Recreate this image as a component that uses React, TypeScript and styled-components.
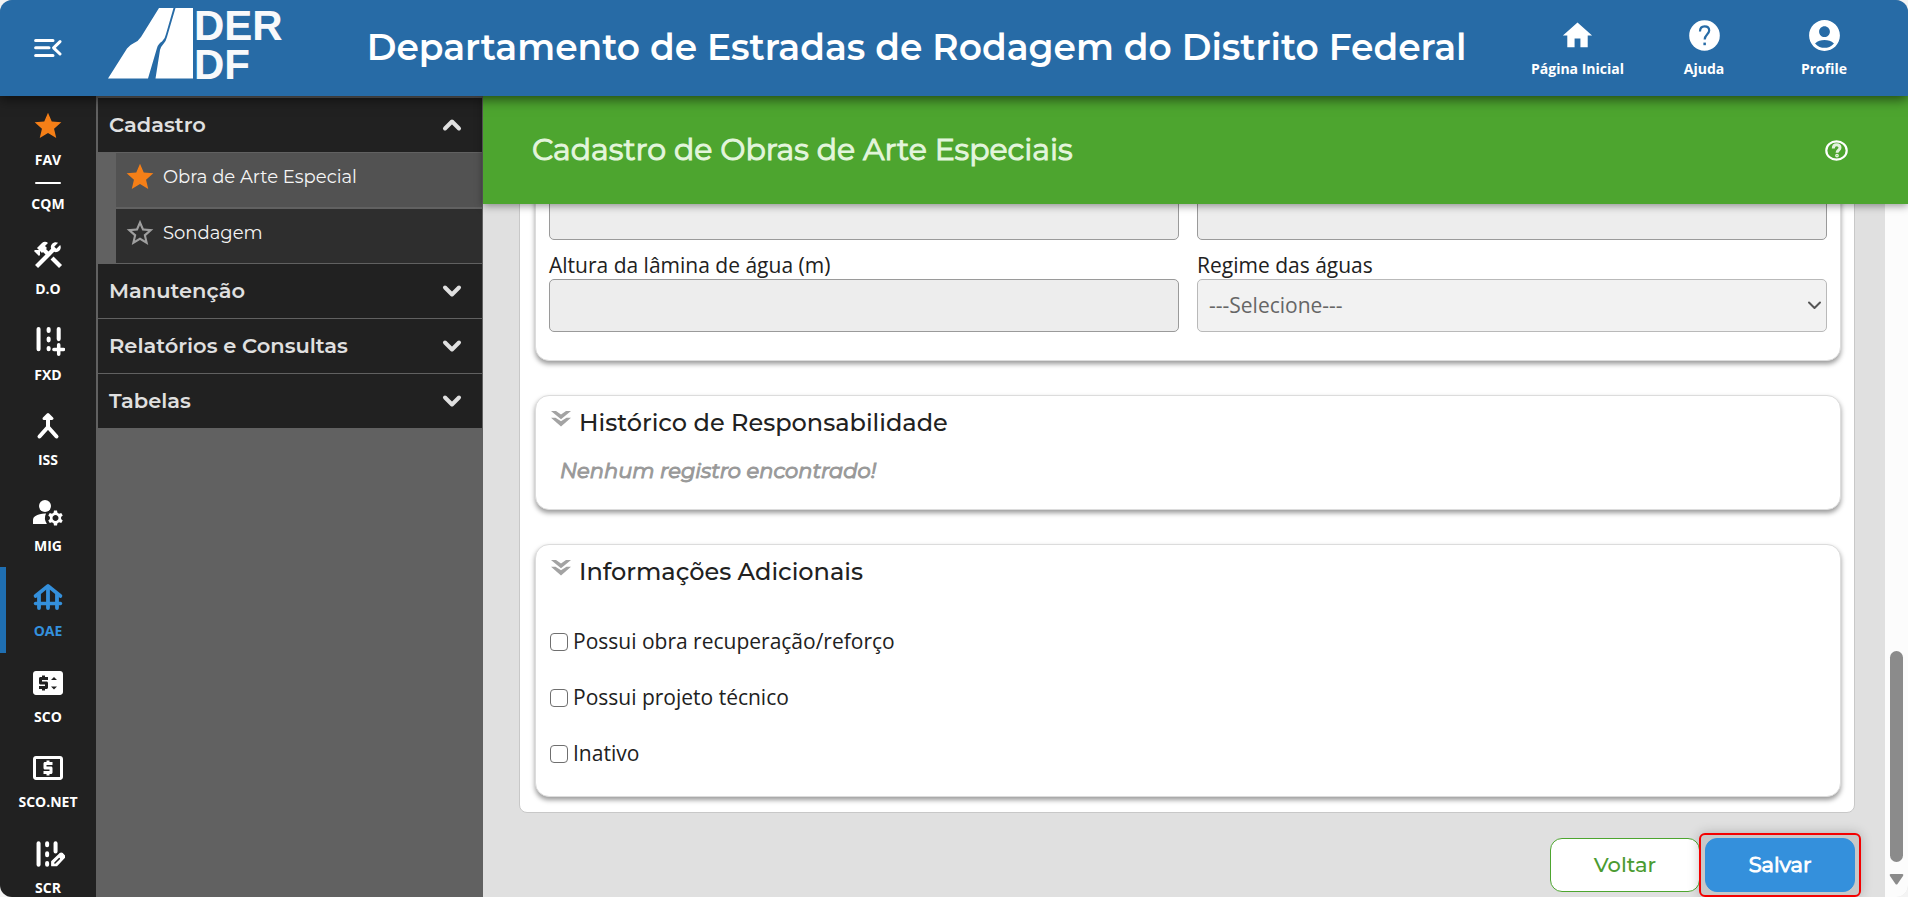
import React from 'react';
import styled, { createGlobalStyle } from 'styled-components';
import {
  MdAccountCircle,
  MdConstruction,
  MdHome,
  MdLocalAtm,
  MdManageAccounts,
  MdPriceChange,
  MdStar,
  MdStarBorder,
} from 'react-icons/md';

const HEADING_FONT = "Montserrat, Inter, 'Open Sans', sans-serif";
const BODY_FONT = "'Open Sans', 'Noto Sans', sans-serif";

const GlobalStyle = createGlobalStyle`
  *, *::before, *::after { box-sizing: border-box; }
  body { margin: 0; background: #f4f4f4; font-family: ${BODY_FONT}; color: #212121; }
  h1, h2, h3, p, ul { margin: 0; padding: 0; }
  ul { list-style: none; }
  a { color: inherit; text-decoration: none; }
  button, input, select { font: inherit; }
  svg { display: block; flex: none; }
`;

/* ---------- shell ---------- */

const Shell = styled.div`
  display: flex;
  flex-direction: column;
  height: 100vh;
  overflow: hidden;
  border-radius: 12px;
  background: #e0e0e0;
`;

const TopBar = styled.header`
  display: flex;
  align-items: center;
  flex: none;
  height: 96px;
  padding-right: 44px;
  background: #276ba6;
  color: #fff;
  box-shadow: 0 3px 12px rgba(0, 0, 0, 0.6);
  z-index: 2;
`;

const MenuButton = styled.button`
  display: grid;
  place-items: center;
  width: 96px;
  height: 96px;
  padding: 0;
  border: 0;
  background: none;
  color: inherit;
  cursor: pointer;
`;

const LogoLink = styled.a`
  display: flex;
  align-self: flex-start;
  gap: 1px;
  margin: 0 84px 0 12px;
  padding-top: 6px;
  svg { margin-top: 2px; }
`;

const LogoText = styled.span`
  font: 700 42px/39px 'Liberation Sans', Arial, sans-serif;
  color: #f8f9fb;
  span { display: block; }
`;

const SiteTitle = styled.h1`
  flex: 1;
  padding-bottom: 2px;
  font: 600 36px/48px ${HEADING_FONT};
  white-space: nowrap;
`;

const TopActions = styled.nav`
  display: flex;
  gap: 40px;
`;

const TopAction = styled.a`
  display: flex;
  flex-direction: column;
  align-items: center;
  gap: 8px;
  min-width: 80px;
  padding-top: 2px;
  font-size: 14px;
  line-height: 20px;
  font-weight: 700;
`;

const Body = styled.div`
  display: flex;
  flex: 1;
  min-height: 0;
`;

/* ---------- module rail ---------- */

const Rail = styled.nav`
  flex: none;
  width: 96px;
  overflow: hidden;
  background: #212121;
  color: #fff;
`;

const RailItem = styled.a<{ $active?: boolean }>`
  display: flex;
  flex-direction: column;
  align-items: center;
  gap: 6px;
  height: 85px;
  padding-top: 14px;
  font-size: 14px;
  line-height: 24px;
  font-weight: 700;
  color: ${(p) => (p.$active ? '#3490dc' : '#fff')};
  box-shadow: ${(p) => (p.$active ? 'inset 6px 0 #1f6fb2' : 'none')};
  &:nth-child(odd) { height: 86px; }
`;

const RailText = styled.a`
  display: flex;
  flex-direction: column;
  align-items: center;
  height: 43px;
  font-size: 14px;
  line-height: 20px;
  font-weight: 700;
  &::before {
    content: '';
    width: 26px;
    height: 2px;
    margin-bottom: 10px;
    border-radius: 1px;
    background: currentColor;
  }
`;

/* ---------- section menu ---------- */

const SideMenu = styled.nav`
  display: flex;
  flex-direction: column;
  gap: 1px;
  flex: none;
  width: 387px;
  padding: 2px 1px 0 2px;
  background: #616161;
  color: #e0e0e0;
`;

const GroupButton = styled.button`
  display: flex;
  align-items: center;
  justify-content: space-between;
  width: 100%;
  height: 54px;
  padding: 0 20px 0 11px;
  border: 0;
  background: #212121;
  color: inherit;
  font: 600 21px/28px ${HEADING_FONT};
  text-align: left;
  cursor: pointer;
`;

const SubMenu = styled.ul`
  display: flex;
  flex-direction: column;
  gap: 2px;
  padding-left: 18px;
`;

const SubLink = styled.a<{ $active?: boolean }>`
  display: flex;
  align-items: center;
  gap: 7px;
  height: 54px;
  padding: 0 8px 6px;
  background: ${(p) => (p.$active ? '#525252' : '#2e2e2e')};
  font: 400 18px/28px ${HEADING_FONT};
  color: #f5f5f5;
`;

const IconTint = styled.span<{ $tint: string }>`
  display: inline-flex;
  color: ${(p) => p.$tint};
`;

/* ---------- main ---------- */

const Main = styled.main`
  display: flex;
  flex-direction: column;
  flex: 1;
  min-width: 0;
`;

const PageBar = styled.div`
  display: flex;
  align-items: center;
  justify-content: space-between;
  flex: none;
  height: 108px;
  padding: 0 60px 0 49px;
  background: #4da52f;
  box-shadow: 0 2px 8px rgba(0, 0, 0, 0.4);
  z-index: 1;
`;

const PageTitle = styled.h2`
  font: 400 30px/40px ${HEADING_FONT};
  -webkit-text-stroke: 1px currentColor;
  color: #e3f5dc;
`;

const HelpButton = styled.button`
  display: grid;
  padding: 0;
  border: 0;
  background: none;
  color: #fff;
  cursor: pointer;
`;

const Viewport = styled.div`
  display: flex;
  flex: 1;
  min-height: 0;
`;

const Scroller = styled.form`
  display: flex;
  flex-direction: column;
  justify-content: flex-end;
  flex: 1;
  min-width: 0;
  overflow: hidden;
  padding: 0 30px 0 36px;
`;

const Sheet = styled.div`
  display: flex;
  flex-direction: column;
  gap: 34px;
  flex: none;
  padding: 16px 13px 15px 15px;
  border: 1px solid #c8c8c8;
  border-radius: 8px;
  background: #fff;
`;

const Card = styled.section`
  padding: 9px 13px 24px;
  border: 1px solid #dcdcdc;
  border-radius: 14px;
  background: #fff;
  box-shadow: 0 3px 5px rgba(0, 0, 0, 0.4);
`;

const CardTitle = styled.h3`
  display: flex;
  align-items: flex-start;
  gap: 8px;
  font: 500 24px/36px ${HEADING_FONT};
  color: #212121;
  svg { margin: 6px 0 0 2px; }
`;

const EmptyNote = styled.p`
  padding: 16px 11px 0;
  font: italic 400 21px/28px ${HEADING_FONT};
  -webkit-text-stroke: 1px currentColor;
  color: #999;
`;

const Fields = styled.div`
  display: grid;
  grid-template-columns: 1fr 1fr;
  gap: 12px 18px;
  padding-bottom: 4px;
`;

const Field = styled.label`
  display: flex;
  flex-direction: column;
  font-size: 21px;
  line-height: 27px;
  font-weight: 400;
`;

const TextInput = styled.input`
  height: 53px;
  padding: 0 12px;
  border: 1px solid #9a9a9a;
  border-radius: 5px;
  background: #ededed;
`;

const SelectWrap = styled.span`
  display: flex;
  position: relative;
  svg { position: absolute; right: 5px; top: 22px; pointer-events: none; }
`;

const Select = styled.select`
  flex: 1;
  height: 53px;
  padding: 0 11px;
  border: 1px solid #b9b9b9;
  border-radius: 5px;
  appearance: none;
  background: #f2f2f2;
  color: #666;
  opacity: 1;
`;

const Checks = styled.div`
  display: flex;
  flex-direction: column;
  gap: 28px;
  padding: 37px 0 5px;
`;

const Check = styled.label`
  display: flex;
  align-items: center;
  gap: 5px;
  font-size: 21px;
  line-height: 28px;
  input {
    appearance: none;
    width: 18px;
    height: 18px;
    margin: 2px 0 0 1px;
    border: 1px solid #6f6f6f;
    border-radius: 4px;
    background: #fff;
  }
  input:checked { background: #3490dc; }
`;

const Actions = styled.div`
  display: flex;
  justify-content: flex-end;
  align-items: center;
  flex: none;
  margin-right: -6px;
  padding-top: 20px;
`;

const Button = styled.button<{ $primary?: boolean }>`
  width: 150px;
  height: 54px;
  padding: 0 0 1px;
  border: 1px solid ${(p) => (p.$primary ? '#3490dc' : '#4da52f')};
  border-radius: 12px;
  background: ${(p) => (p.$primary ? '#3490dc' : '#fff')};
  color: ${(p) => (p.$primary ? '#fff' : '#4b9b31')};
  font: ${(p) => (p.$primary ? 400 : 500)} 21px/28px ${HEADING_FONT};
  -webkit-text-stroke: ${(p) => (p.$primary ? '1px currentColor' : '0')};
  cursor: pointer;
`;

const Highlight = styled.span`
  display: inline-flex;
  margin-left: -1px;
  padding: 3px 4px;
  border: 2px solid #f40000;
  border-radius: 6px;
  background: #c8c8c8;
  box-shadow: 0 0 12px rgba(0, 0, 0, 0.22);
`;

const ScrollTrack = styled.div`
  display: flex;
  flex-direction: column;
  justify-content: flex-end;
  align-items: center;
  gap: 12px;
  flex: none;
  width: 23px;
  padding-bottom: 12px;
  background: #fcfcfc;
`;

const ScrollThumb = styled.div`
  width: 13px;
  height: 31%;
  border-radius: 7px;
  background: #8b8b8b;
`;

/* ---------- drawings ---------- */

const stroke = {
  fill: 'none',
  stroke: 'currentColor',
  strokeWidth: 2,
  strokeLinecap: 'round' as const,
  strokeLinejoin: 'round' as const,
};

const MenuOpenIcon = () => (
  <svg width="28" height="20" viewBox="0 0 28 20" {...stroke} strokeWidth={3}>
    <path d="M1.600 2.400H19M1.600 9.800H15M1.600 17.400H19" />
    <path d="M26 3.600L19.600 9.800L26 16" />
  </svg>
);

const LogoRoad = () => (
  <svg width="85" height="71" viewBox="0 0 85 71" fill="#fff">
    <path d="M51 0H65.500L58 26Q57 31 54 33.500Q50 36 49 40L40 70.500H0L19 40.500Q21.500 37 26 35Q30 33.500 33 29Z" />
    <path d="M67.500 0H85V70.500H47.500L52 42Q52.500 39 55 36.500Q58 33.500 59 29Z" />
  </svg>
);

const HelpIcon = () => (
  <svg width="31" height="31" viewBox="0 0 31 31">
    <circle cx="15.500" cy="15.500" r="15.300" fill="#fff" />
    <path
      d="M11 11.500C11 8.200 13 6.300 15.600 6.300C18.300 6.300 20.200 8 20.200 10.600C20.200 14 15.700 14.800 15.700 19.600"
      fill="none"
      stroke="#276ba6"
      strokeWidth="2.200"
    />
    <rect x="14.400" y="22.600" width="2.500" height="2.600" fill="#276ba6" />
  </svg>
);

const HelpOutlineIcon = () => (
  <svg width="23" height="21" viewBox="0 0 23 21" fill="none" stroke="currentColor">
    <ellipse cx="11.500" cy="10.500" rx="10.200" ry="9.200" strokeWidth="2.200" />
    <path d="M8.300 8.400C8.300 6.100 9.700 4.700 11.700 4.700C13.700 4.700 15 6 15 7.800C15 10 12.100 10.400 12.100 12.800" strokeWidth="3" opacity=".85" />
    <circle cx="12" cy="15.600" r="1.200" strokeWidth="1.400" opacity=".85" />
  </svg>
);

const Chevron = ({ up }: { up?: boolean }) => (
  <svg width="20" height="14" viewBox="0 0 20 14" {...stroke} strokeWidth={4}>
    <path d={up ? 'M3 10.500L10 3.500L17 10.500' : 'M3 3.500L10 10.500L17 3.500'} />
  </svg>
);

const SelectArrow = () => (
  <svg width="15" height="9" viewBox="0 0 15 9" {...stroke} stroke="#555">
    <path d="M2 1.500L7.500 7L13 1.500" />
  </svg>
);

const DoubleChevron = () => (
  <svg width="20" height="16" viewBox="0 0 20 16" fill="#a3a3a3">
    <path d="M0 0H5L10 3.600L15 0H20L10 8.200Z" />
    <path d="M0 6.800H4.500L10 10.200L15.500 6.800H20L10 15.500Z" />
  </svg>
);

const AddRoadIcon = () => (
  <svg width="34" height="34" viewBox="-2 -3 27 27" {...stroke}>
    <path d="M4 1V17M12 1V2.500M12 8.500V10M12 16V17M20 1V9" strokeWidth="3.200" />
    <path d="M20 13.500V21M16.200 17.200H23.800" strokeWidth="2.800" />
  </svg>
);

const EditRoadIcon = () => (
  <svg width="34" height="34" viewBox="-2 -4 27 27" {...stroke}>
    <path d="M4 1V18M10.800 1V2.500M10.800 9V10.500M10.800 16.700V18M17.500 1V7.500" strokeWidth="3.200" />
    <path
      d="M14.500 15.500L21 9.200Q22 8.500 23 9.200L24.300 10.600Q25.200 11.600 24.300 12.600L18.300 18.800H14.500Z"
      fill="currentColor"
      strokeWidth="1"
    />
    <path d="M17 16.600L20.500 13.200" stroke="#212121" strokeWidth="1.200" />
  </svg>
);

const MergeIcon = () => (
  <svg width="34" height="34" viewBox="0 0 34 34" {...stroke} strokeWidth={4}>
    <path d="M17 8V18L8.500 27.500M17 18L25.500 27.500" />
    <path d="M13 9.500L17 5.500L21 9.500Z" fill="currentColor" strokeWidth="3" />
  </svg>
);

const FoundationIcon = () => (
  <svg width="34" height="34" viewBox="0 0 34 34" {...stroke}>
    <path d="M4.500 16L17 5.800L29.500 16" strokeWidth="3.600" />
    <path d="M4.500 23.500H29.500" strokeWidth="3.400" />
    <path d="M8 14.500V28M17 7V28M26 14.500V28" strokeWidth="3.800" />
  </svg>
);

/* ---------- data ---------- */

const modules = [
  { label: 'D.O', icon: <MdConstruction size={34} /> },
  { label: 'FXD', icon: <AddRoadIcon /> },
  { label: 'ISS', icon: <MergeIcon /> },
  { label: 'MIG', icon: <MdManageAccounts size={36} /> },
  { label: 'OAE', icon: <FoundationIcon />, active: true },
  { label: 'SCO', icon: <MdPriceChange size={36} /> },
  { label: 'SCO.NET', icon: <MdLocalAtm size={36} /> },
  { label: 'SCR', icon: <EditRoadIcon /> },
];

const IconSlot = styled.span`
  display: flex;
  align-items: center;
  height: 32px;
`;

const TopIconSlot = styled.span`
  display: flex;
  align-items: center;
  height: 31px;
`;

export default function App() {
  return (
    <>
      <GlobalStyle />
      <Shell>
        <TopBar>
          <MenuButton type="button" aria-label="Recolher menu">
            <MenuOpenIcon />
          </MenuButton>
          <LogoLink href="#">
            <LogoRoad />
            <LogoText>
              <span>DER</span>
              <span>DF</span>
            </LogoText>
          </LogoLink>
          <SiteTitle>Departamento de Estradas de Rodagem do Distrito Federal</SiteTitle>
          <TopActions>
            <TopAction href="#">
              <TopIconSlot><MdHome size={35} /></TopIconSlot>
              Página Inicial
            </TopAction>
            <TopAction href="#">
              <TopIconSlot><HelpIcon /></TopIconSlot>
              Ajuda
            </TopAction>
            <TopAction href="#">
              <TopIconSlot><MdAccountCircle size={37} /></TopIconSlot>
              Profile
            </TopAction>
          </TopActions>
        </TopBar>
        <Body>
          <Rail>
            <RailItem href="#">
              <IconSlot>
                <IconTint $tint="#f57f17"><MdStar size={32} /></IconTint>
              </IconSlot>
              FAV
            </RailItem>
            <RailText href="#">CQM</RailText>
            {modules.map((m) => (
              <RailItem key={m.label} href="#" $active={m.active}>
                <IconSlot>{m.icon}</IconSlot>
                {m.label}
              </RailItem>
            ))}
          </Rail>
          <SideMenu>
            <GroupButton type="button" aria-expanded="true">
              Cadastro
              <Chevron up />
            </GroupButton>
            <SubMenu>
              <li>
                <SubLink href="#" $active>
                  <IconTint $tint="#f57f17"><MdStar size={32} /></IconTint>
                  Obra de Arte Especial
                </SubLink>
              </li>
              <li>
                <SubLink href="#">
                  <IconTint $tint="#9e9e9e"><MdStarBorder size={32} /></IconTint>
                  Sondagem
                </SubLink>
              </li>
            </SubMenu>
            {['Manutenção', 'Relatórios e Consultas', 'Tabelas'].map((g) => (
              <GroupButton key={g} type="button" aria-expanded="false">
                {g}
                <Chevron />
              </GroupButton>
            ))}
          </SideMenu>
          <Main>
            <PageBar>
              <PageTitle>Cadastro de Obras de Arte Especiais</PageTitle>
              <HelpButton type="button" aria-label="Ajuda da página">
                <HelpOutlineIcon />
              </HelpButton>
            </PageBar>
            <Viewport>
              <Scroller onSubmit={(e) => e.preventDefault()}>
                <Sheet>
                  <Card>
                    <Fields>
                      <TextInput aria-label="Nome do curso d'água" disabled />
                      <TextInput aria-label="Bacia hidrográfica" disabled />
                      <Field>
                        Altura da lâmina de água (m)
                        <TextInput disabled />
                      </Field>
                      <Field>
                        Regime das águas
                        <SelectWrap>
                          <Select disabled>
                            <option>---Selecione---</option>
                          </Select>
                          <SelectArrow />
                        </SelectWrap>
                      </Field>
                    </Fields>
                  </Card>
                  <Card>
                    <CardTitle>
                      <DoubleChevron />
                      Histórico de Responsabilidade
                    </CardTitle>
                    <EmptyNote>Nenhum registro encontrado!</EmptyNote>
                  </Card>
                  <Card>
                    <CardTitle>
                      <DoubleChevron />
                      Informações Adicionais
                    </CardTitle>
                    <Checks>
                      <Check><input type="checkbox" />Possui obra recuperação/reforço</Check>
                      <Check><input type="checkbox" />Possui projeto técnico</Check>
                      <Check><input type="checkbox" />Inativo</Check>
                    </Checks>
                  </Card>
                </Sheet>
                <Actions>
                  <Button type="button">Voltar</Button>
                  <Highlight>
                    <Button type="submit" $primary>Salvar</Button>
                  </Highlight>
                </Actions>
              </Scroller>
              <ScrollTrack aria-hidden="true">
                <ScrollThumb />
                <svg width="15" height="11" viewBox="0 0 15 11" fill="#8b8b8b">
                  <path d="M1.500 0H13.500Q15 0.500 14 2L8.500 10Q7.500 11 6.500 10L1 2Q0 0.500 1.500 0Z" />
                </svg>
              </ScrollTrack>
            </Viewport>
          </Main>
        </Body>
      </Shell>
    </>
  );
}
